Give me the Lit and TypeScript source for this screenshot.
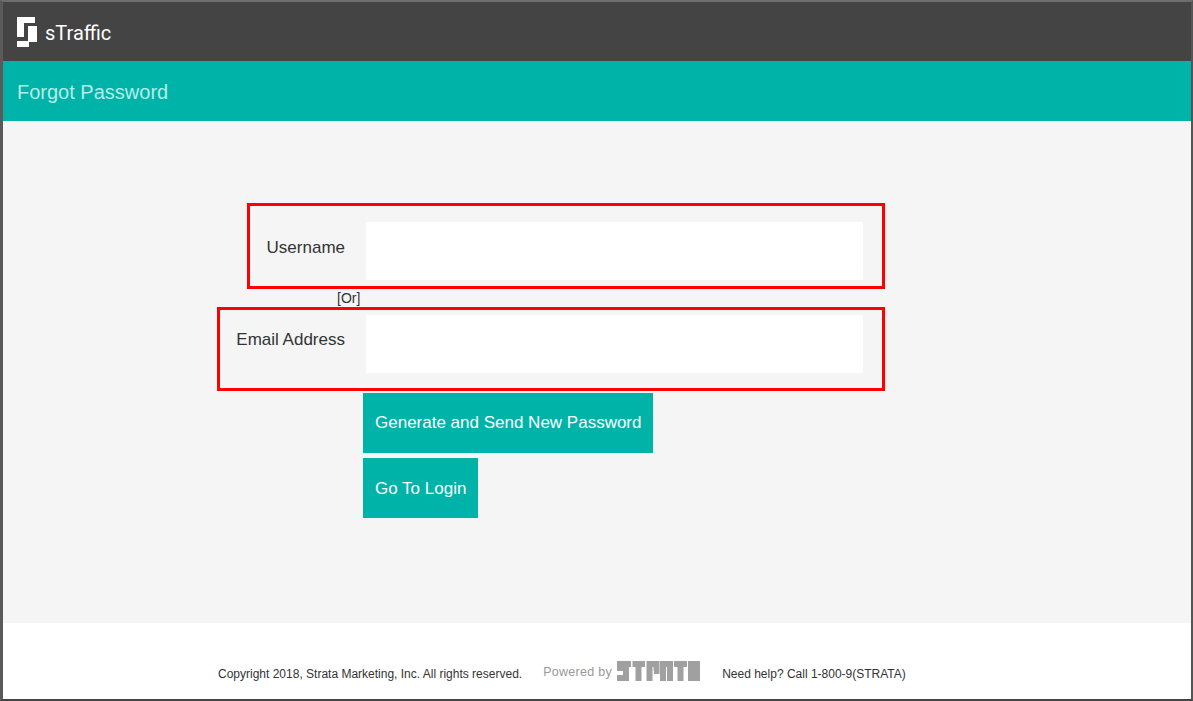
import { LitElement, html, css } from "lit";
import { customElement } from "lit/decorators.js";

@customElement("app-root")
export class AppRoot extends LitElement {
  static styles = css`
    :host {
      display: block;
      width: 1193px;
      height: 701px;
      box-sizing: border-box;
      border-top: 2px solid #6e6e6e;
      border-left: 3px solid #5a5a5a;
      border-right: 2px solid #555;
      border-bottom: 2px solid #444;
      font-family: "Liberation Sans", Arial, sans-serif;
      color: #333;
      background: #fff;
      overflow: hidden;
    }
    .page { display: flex; flex-direction: column; height: 100%; }
    .top {
      height: 59px;
      background: #444;
      display: flex;
      align-items: center;
      padding-left: 14px;
      gap: 8px;
      color: #fff;
      font-family: Roboto, sans-serif;
      font-size: 20px;
      flex: none;
    }
    .top span { margin-top: 2px; }
    .mark { display: block; width: 20px; height: 30px; }
    .sub {
      height: 60px;
      box-sizing: border-box;
      padding: 2px 0 0 14px;
      background: #00b3a9;
      color: #b5ece6;
      display: flex;
      align-items: center;
      font-size: 20px;
      flex: none;
    }
    main {
      flex: 1;
      background: #f5f5f5;
      padding-top: 82px;
      display: flex;
      flex-direction: column;
      align-items: flex-start;
    }
    .box {
      border: 3px solid #f00;
      box-sizing: border-box;
      display: flex;
      margin-left: 244px;
      width: 638px;
      height: 86px;
      padding-top: 16px;
    }
    .box.wide { margin-left: 214px; width: 668px; height: 84px; padding-top: 5px; }
    .lab {
      flex: 1;
      font-size: 17px;
      line-height: 20px;
      text-align: right;
      padding-right: 21px;
      padding-top: 16px;
    }
    .wide .lab { padding-top: 15px; }
    .field {
      width: 497px;
      height: 58px;
      margin-right: 19px;
      background: #fff;
      flex: none;
    }
    .or {
      margin-left: 334px;
      font-size: 14px;
      line-height: 18px;
    }
    .btn {
      margin-left: 360px;
      height: 60px;
      box-sizing: border-box;
      padding: 0 12px;
      display: flex;
      align-items: center;
      background: #00b3a9;
      color: #fff;
      font-size: 17px;
    }
    .b1 { margin-top: 2px; padding-right: 11px; }
    .b2 { margin-top: 5px; padding-top: 2px; }
    footer {
      height: 76px;
      flex: none;
      display: flex;
      align-items: center;
      padding: 25px 0 0 215px;
      box-sizing: border-box;
      font-size: 12px;
      color: #333;
    }
    .pow {
      margin-left: 21px;
      color: #999;
      font-size: 12.5px;
      letter-spacing: 0.3px;
      display: flex;
      align-items: center;
      gap: 5px;
      line-height: 16px;
    }
    .powtext { margin-top: -4px; }
    .strata { display: block; width: 83px; height: 20px; margin-top: -5px; }
    .help { margin-left: 22px; }
  `;

  render() {
    return html`
      <div class="page">
        <header class="top">
          <svg class="mark" viewBox="0 0 20 30" fill="#fff">
            <path d="M0 0H18V6H7V20H0Z" />
            <path d="M11 9H20V25H12V30H0V24H11Z" />
          </svg>
          <span>sTraffic</span>
        </header>
        <div class="sub">Forgot Password</div>
        <main>
          <div class="box">
            <div class="lab">Username</div>
            <div class="field"></div>
          </div>
          <div class="or">[Or]</div>
          <div class="box wide">
            <div class="lab">Email Address</div>
            <div class="field"></div>
          </div>
          <div class="btn b1">Generate and Send New Password</div>
          <div class="btn b2">Go To Login</div>
        </main>
        <footer>
          <span>Copyright 2018, Strata Marketing, Inc. All rights reserved.</span>
          <span class="pow">
            <span class="powtext">Powered by</span>
            <svg class="strata" viewBox="0 0 83 20" fill="none" stroke="#a0a0a0" stroke-width="6">
              <path d="M0 17H9V3H14" />
              <path d="M3 0V10" />
              <path d="M15.5 3H28M21.5 3V20" />
              <path d="M32.5 20V3H39.5V10H37" />
              <path d="M46 20V3H53V20" />
              <path d="M57 3H70M63.5 3V20" />
              <path d="M74 20V3H80V17H76" />
            </svg>
          </span>
          <span class="help">Need help? Call 1-800-9(STRATA)</span>
        </footer>
      </div>
    `;
  }
}
